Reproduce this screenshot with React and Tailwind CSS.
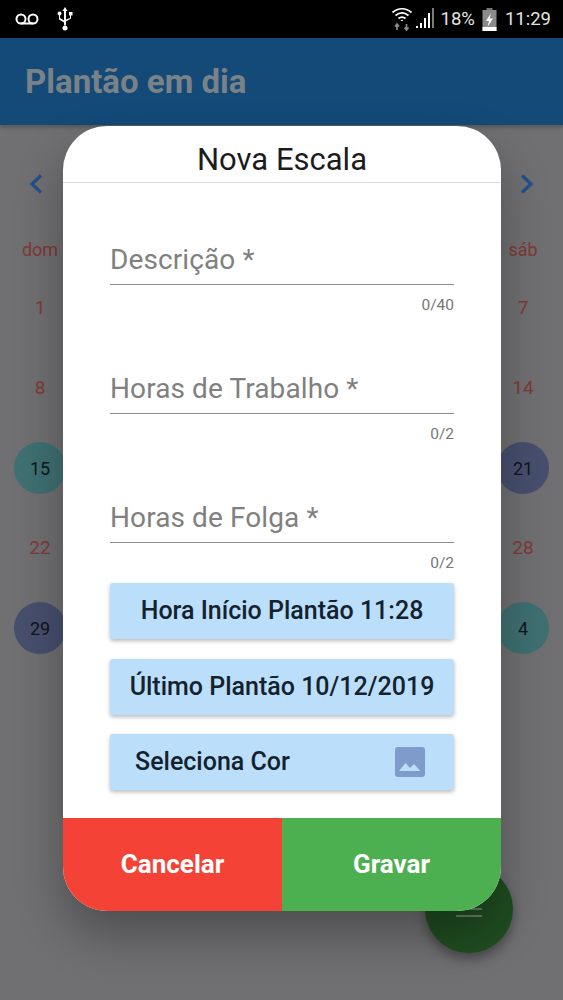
import React from 'react';

const DayNum = ({ children }) => (
  <div className="flex h-[80px] items-center justify-center text-[19px] text-[#7f3a36]">{children}</div>
);

const DayCircle = ({ children, color }) => (
  <div className="flex h-[80px] items-center justify-center">
    <div className={`flex h-[52px] w-[52px] items-center justify-center rounded-full text-[18px] text-[#10151c] ${color}`}>
      {children}
    </div>
  </div>
);

const Field = ({ label, count, className = '' }) => (
  <div className={className}>
    <div className="h-[77px] border-b border-[#8c8c8c] pt-[32px] text-[28px] leading-[40px] tracking-[0.1px] text-[#808080]">
      {label}
    </div>
    <div className="mt-[11px] text-right text-[15.5px] leading-[18px] text-[#777777]">{count}</div>
  </div>
);

const PickButton = ({ children, className = '' }) => (
  <button className={`flex h-[56px] w-full items-center rounded-[3px] bg-[#bbdefb] text-[25px] font-medium text-[#14222e] shadow-[0_2px_4px_rgba(0,0,0,0.28)] ${className}`}>
    {children}
  </button>
);

const App = () => {
  return (
    <div className="relative h-[1000px] w-[563px] overflow-hidden bg-[#706f71] font-['Roboto',sans-serif]">
      {/* Status bar */}
      <div className="flex h-[38px] items-center justify-between bg-black pl-[15px] pr-[12px]">
        <div className="flex items-center gap-[18px]">
          <svg width="24" height="12" viewBox="0 0 24 12" fill="none" stroke="#fff" strokeWidth="2">
            <circle cx="6" cy="6" r="4.5" />
            <circle cx="18" cy="6" r="4.5" />
            <path d="M6 10.5h12" />
          </svg>
          <svg width="16" height="24" viewBox="0 0 16 24" fill="#fff">
            <path d="M8 0l2.5 4H9v13.5a1 1 0 0 1-2 0V4H5.500z" />
            <rect x="12" y="5" width="3.500" height="3.500" />
            <circle cx="2.500" cy="6.500" r="2" />
            <path d="M2 8h1v3l5 3v2l-6-3.500zM13 8h1v3.500L8 15v-2l5-2z" />
            <circle cx="8" cy="21" r="2.500" />
          </svg>
        </div>
        <div className="flex items-center text-[#e4e4e4]">
          <svg width="22" height="24" viewBox="0 0 22 24" fill="none" stroke="#fff" strokeWidth="1.700" className="mr-[2px]">
            <path d="M1.500 5.500c5.500-5 13.500-5 19 0M4.500 8.500c4-3.300 9-3.300 13 0M7.500 11.500c2.200-1.700 4.800-1.700 7 0" />
            <path d="M9.500 14l1.500-1.500 1.500 1.500z" fill="#fff" stroke="none" />
            <path d="M6 23v-5M4 19.500l2-2.500 2 2.500M15.500 17v5M13.500 20.500l2 2.500 2-2.500" stroke="#8a8a8a" />
          </svg>
          <svg width="20" height="24" viewBox="0 0 20 24" fill="#fff" className="mr-[6px] mt-[-2px]">
            <rect x="1" y="20" width="2" height="2" />
            <rect x="5" y="17" width="2" height="5" />
            <rect x="9" y="12" width="2" height="10" />
            <rect x="13" y="7" width="2" height="15" />
            <rect x="17" y="2" width="2" height="20" fill="#7c7c7c" />
          </svg>
          <span className="text-[18.500px] leading-none">18%</span>
          <svg width="15" height="23" viewBox="0 0 15 23" className="ml-[7px] mr-[8px]">
            <rect x="4.500" y="0" width="6" height="2.500" fill="#777" />
            <rect x="0.500" y="2" width="14" height="21" fill="#8a8a8a" />
            <rect x="0.500" y="19" width="14" height="4" fill="#fff" />
            <path d="M9 5l-5 8h3l-1.500 6 5.500-8.500H7.500z" fill="#fff" />
          </svg>
          <span className="text-[18.500px] leading-none">11:29</span>
        </div>
      </div>

      {/* App bar */}
      <div className="flex h-[87px] items-center bg-[#134a78] px-[25px] shadow-[0_2px_4px_rgba(0,0,0,0.25)]">
        <h1 className="text-[33px] font-bold text-[#7a8288]">Plantão em dia</h1>
      </div>

      {/* Calendar behind the dialog */}
      <div className="flex justify-between px-[28px] pt-[48px]">
        <svg width="16" height="22" viewBox="0 0 16 22" fill="none" stroke="#24508a" strokeWidth="3.200">
          <path d="M13 2.500L4 11l9 8.500" />
        </svg>
        <svg width="16" height="22" viewBox="0 0 16 22" fill="none" stroke="#24508a" strokeWidth="3.200">
          <path d="M3 2.500L12 11l-9 8.500" />
        </svg>
      </div>
      <div className="mt-[34px] grid grid-cols-[80px_1fr_80px] px-0">
        <div>
          <div className="flex h-[40px] items-center justify-center text-[18px] text-[#7f3a36]">dom</div>
          <div className="mt-[-1px]">
            <DayNum>1</DayNum>
            <DayNum>8</DayNum>
            <DayCircle color="bg-[#3f7072]">15</DayCircle>
            <DayNum>22</DayNum>
            <DayCircle color="bg-[#474f6e]">29</DayCircle>
          </div>
        </div>
        <div />
        <div>
          <div className="flex h-[40px] items-center justify-center text-[18px] text-[#7f3a36]">sáb</div>
          <div className="mt-[-1px]">
            <DayNum>7</DayNum>
            <DayNum>14</DayNum>
            <DayCircle color="bg-[#474f6e]">21</DayCircle>
            <DayNum>28</DayNum>
            <DayCircle color="bg-[#3f7072]">4</DayCircle>
          </div>
        </div>
      </div>

      {/* FAB behind the dialog */}
      <div className="absolute left-[425px] top-[865px] flex h-[88px] w-[88px] flex-col items-center justify-center gap-[5px] rounded-full bg-[#1f4d20] shadow-[0_6px_12px_rgba(0,0,0,0.35)]">
        <span className="h-[2px] w-[26px] bg-[#6b7a6b]" />
        <span className="h-[2px] w-[26px] bg-[#6b7a6b]" />
        <span className="h-[2px] w-[26px] bg-[#6b7a6b]" />
      </div>

      {/* Dialog */}
      <div className="absolute left-[63px] top-[126px] flex h-[785px] w-[438px] flex-col overflow-hidden rounded-[44px] bg-white shadow-[0_24px_48px_rgba(0,0,0,0.3)]">
        <div className="flex h-[57px] items-center justify-center border-b border-[#dcdcdc] pt-[12px] text-[31px] text-[#1c1c1c]">
          Nova Escala
        </div>
        <div className="flex-1 px-[47px]">
          <Field label="Descrição *" count="0/40" className="mt-[25px]" />
          <Field label="Horas de Trabalho *" count="0/2" className="mt-[23px]" />
          <Field label="Horas de Folga *" count="0/2" className="mt-[23px]" />
          <div className="mt-[11px] flex flex-col gap-[19.500px]">
            <PickButton className="justify-center">Hora Início Plantão 11:28</PickButton>
            <PickButton className="justify-center">Último Plantão 10/12/2019</PickButton>
            <PickButton className="justify-between pl-[25px] pr-[29px]">
              Seleciona Cor
              <svg width="30" height="30" viewBox="0 0 30 30">
                <rect width="30" height="30" rx="3" fill="#7f9bcb" />
                <path d="M4 24l6.500-8 4.500 5 4-4 6.500 7z" fill="#bbdefb" />
              </svg>
            </PickButton>
          </div>
        </div>
        <div className="flex h-[93px] text-[26px] font-bold text-white">
          <button className="flex w-[219px] items-center justify-center bg-[#f44336]">Cancelar</button>
          <button className="flex flex-1 items-center justify-center bg-[#4caf50]">Gravar</button>
        </div>
      </div>
    </div>
  );
};

export default App;
